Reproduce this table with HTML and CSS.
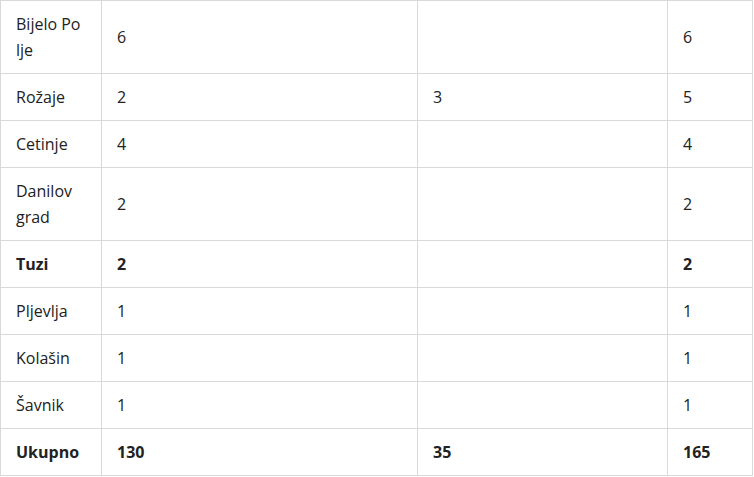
FILE: index.html
```html
<!DOCTYPE html>
<html lang="sr">
<head>
<meta charset="utf-8">
<link rel="stylesheet" href="styles.css">
</head>
<body>
<table class="results">
  <colgroup>
    <col class="c1"><col class="c2"><col class="c3"><col class="c4">
  </colgroup>
  <tbody>
    <tr><td>Bijelo Po<wbr>lje</td><td>6</td><td></td><td>6</td></tr>
    <tr><td>Rožaje</td><td>2</td><td>3</td><td>5</td></tr>
    <tr><td>Cetinje</td><td>4</td><td></td><td>4</td></tr>
    <tr><td>Danilov grad</td><td>2</td><td></td><td>2</td></tr>
    <tr class="strong"><td>Tuzi</td><td>2</td><td></td><td>2</td></tr>
    <tr><td>Pljevlja</td><td>1</td><td></td><td>1</td></tr>
    <tr><td>Kolašin</td><td>1</td><td></td><td>1</td></tr>
    <tr><td>Šavnik</td><td>1</td><td></td><td>1</td></tr>
    <tr class="strong"><td>Ukupno</td><td>130</td><td>35</td><td>165</td></tr>
  </tbody>
</table>
</body>
</html>
```
FILE: styles.css
```css
html, body {
  margin: 0;
  padding: 0;
  background: #fff;
}
.results {
  border-collapse: collapse;
  table-layout: fixed;
  width: 752px;
  font-family: "Open Sans", Lato, sans-serif;
  font-size: 16px;
  line-height: 26px;
  color: #222;
}
.c1 { width: 101px; }
.c2 { width: 316px; }
.c3 { width: 250px; }
.c4 { width: 85px; }
.results td {
  border: 1px solid #d9d9d9;
  padding: 10px 15px;
  vertical-align: middle;
  text-align: left;
}
.strong td {
  font-weight: 700;
}
```
